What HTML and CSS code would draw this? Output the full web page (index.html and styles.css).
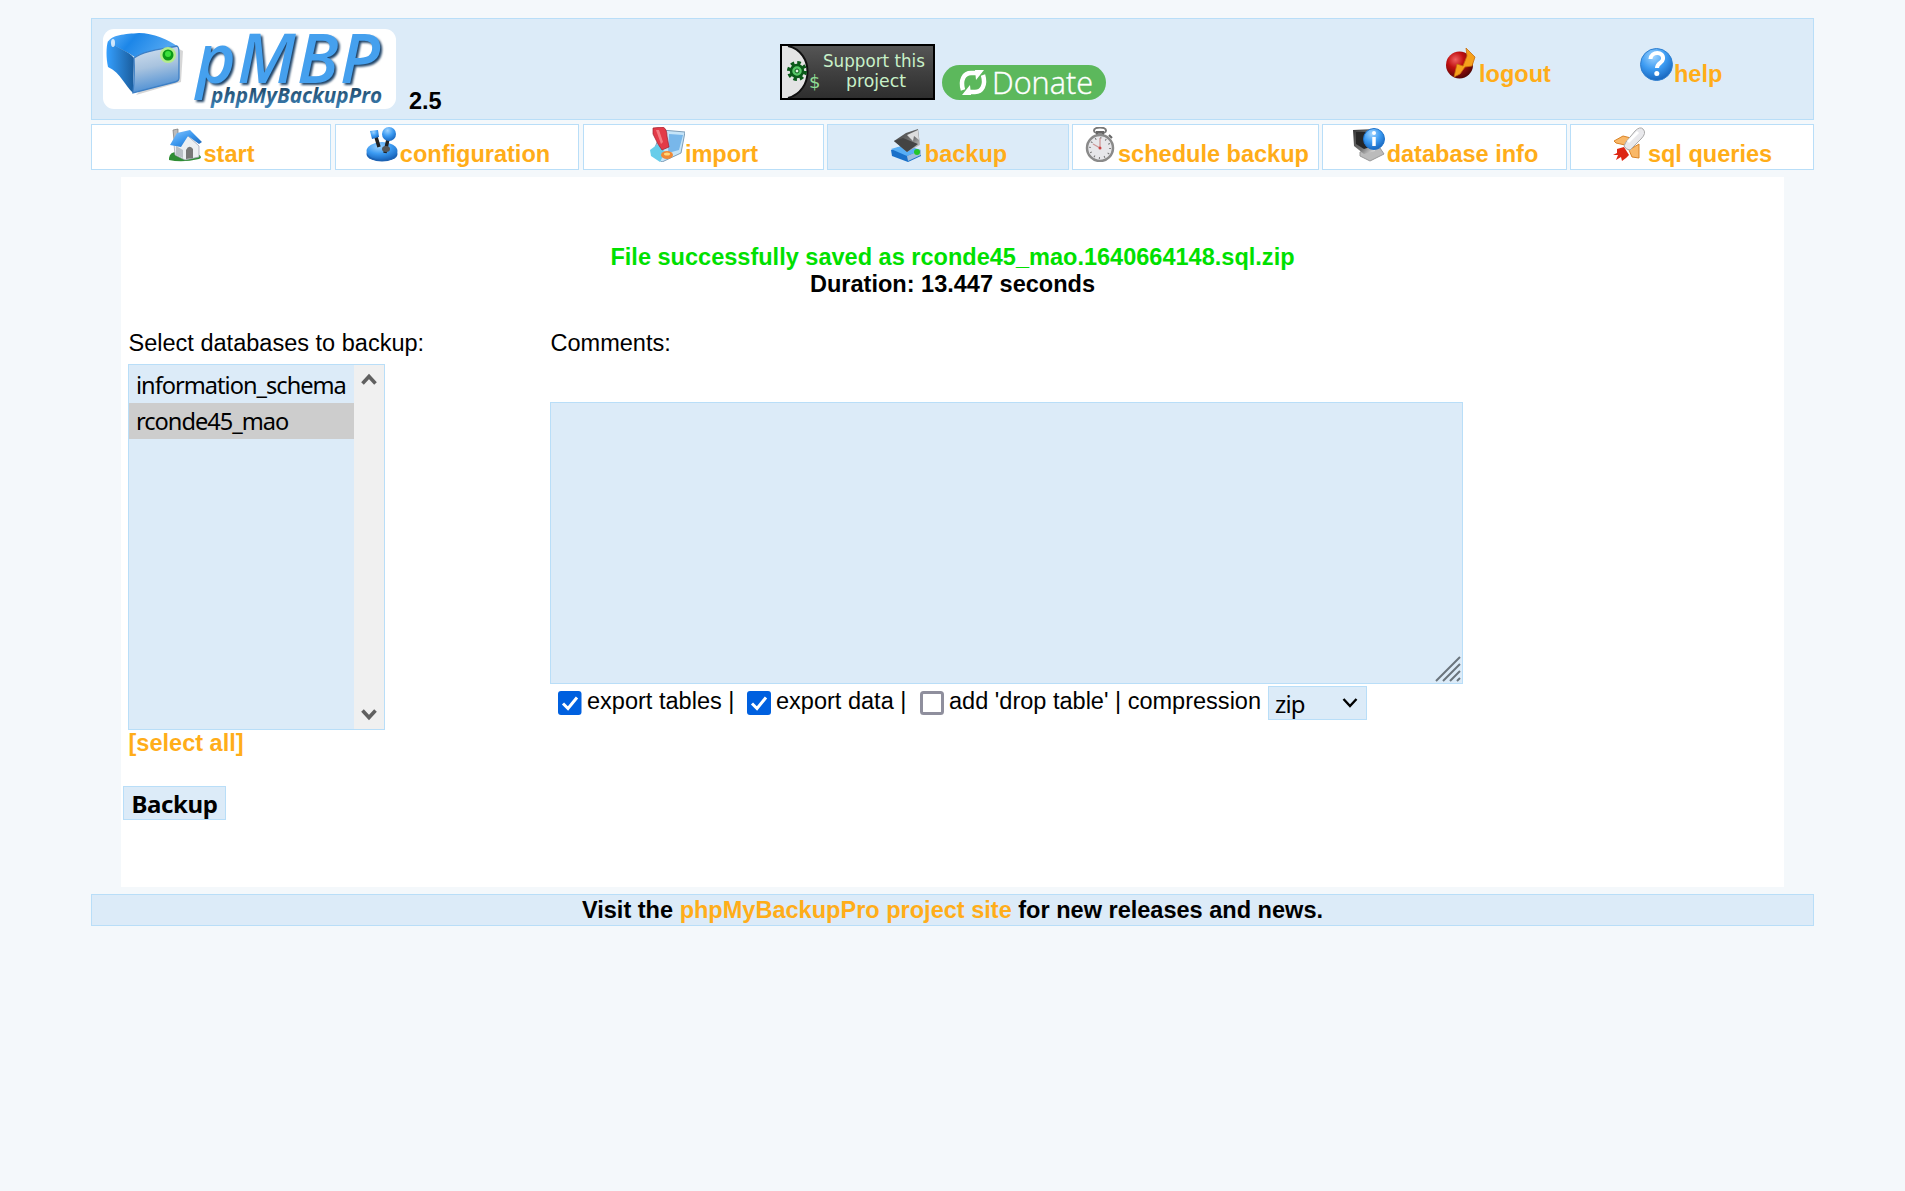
FILE: index.html
```html
<!DOCTYPE html>
<html lang="en">
<head>
<meta charset="utf-8">
<title>phpMyBackupPro</title>
<link rel="stylesheet" href="styles.css">
</head>
<body>
<svg class="defs" width="0" height="0">
  <defs>
    <linearGradient id="blue" x1="0" y1="0" x2="1" y2="1"><stop offset="0" stop-color="#8fcaff"/><stop offset=".5" stop-color="#3b97ee"/><stop offset="1" stop-color="#1b5fae"/></linearGradient>
    <linearGradient id="top" x1="0" y1="0" x2="1" y2=".3"><stop offset="0" stop-color="#5db2fb"/><stop offset=".4" stop-color="#1c86e8"/><stop offset="1" stop-color="#55a9f2"/></linearGradient>
    <linearGradient id="side" x1="0" y1="0" x2="1" y2="0"><stop offset="0" stop-color="#35a0ff"/><stop offset="1" stop-color="#1a5c9c"/></linearGradient>
    <linearGradient id="front" x1="0" y1="0" x2=".2" y2="1"><stop offset="0" stop-color="#d5e2f0"/><stop offset=".5" stop-color="#a8c3df"/><stop offset="1" stop-color="#4d8fd4"/></linearGradient>
    <linearGradient id="dark" x1="0" y1="0" x2="0" y2="1"><stop offset="0" stop-color="#555"/><stop offset=".5" stop-color="#404040"/><stop offset="1" stop-color="#2e2e2e"/></linearGradient>
    <linearGradient id="metal" x1="0" y1="0" x2="1" y2="1"><stop offset="0" stop-color="#333"/><stop offset=".6" stop-color="#777"/><stop offset="1" stop-color="#eee"/></linearGradient>
    <linearGradient id="word" x1="0" y1="0" x2="0" y2="1"><stop offset="0" stop-color="#17364f"/><stop offset="1" stop-color="#3f86bd"/></linearGradient>
    <radialGradient id="ball" cx=".4" cy=".25" r=".8"><stop offset="0" stop-color="#9fd4ff"/><stop offset=".5" stop-color="#3c9bf2"/><stop offset="1" stop-color="#1460b8"/></radialGradient>
    <radialGradient id="red" cx=".35" cy=".3" r=".75"><stop offset="0" stop-color="#f06060"/><stop offset=".4" stop-color="#c01010"/><stop offset="1" stop-color="#4c0505"/></radialGradient>
  </defs>
</svg>
<header class="header">
  <svg class="logo" width="293" height="80" viewBox="0 0 293 80">
    <rect width="293" height="80" rx="11" fill="#fff"/>
    <path d="M31 64L76 51L78 20L62 12L33 62Z" fill="#999" opacity=".4" transform="translate(2 2)"/>
    <path d="M5 13C8 6 22 5 36 4C50 4 66 11 74 17C60 20 44 22 33 29C25 23 15 19 5 13Z" fill="url(#top)"/>
    <path d="M5 12C12 18 26 22 31 29L30 64C22 57 18 44 5 38C3 29 3 18 5 12Z" fill="url(#side)"/>
    <path d="M31 29C42 21 61 20 74 17Q76 18 76 24V49Q76 52 72 53L30 64Q32 45 31 29Z" fill="url(#front)" stroke="#3d7fc5" stroke-width="1.3"/>
    <ellipse cx="10" cy="14" rx="2" ry="4" fill="#fff" opacity=".75"/>
    <circle cx="65" cy="26" r="8" fill="#b4ec8c"/><circle cx="65" cy="26" r="5.5" fill="#0a9a16"/><circle cx="65" cy="25" r="3" fill="#3be03b"/>
    <text class="logo-big" x="93" y="54" textLength="184" lengthAdjust="spacing">pMBP</text>
    <text class="logo-small" x="108" y="74" textLength="171" lengthAdjust="spacingAndGlyphs">phpMyBackupPro</text>
  </svg>
  <span class="version">2.5</span>
  <div class="badges">
    <svg width="155" height="56" viewBox="0 0 155 56">
      <rect width="155" height="56" fill="#000"/><rect x="2" y="2" width="151" height="52" fill="url(#dark)"/>
      <path d="M2 2H8C34 8 34 47 8 54H2Z" fill="#e4e4e4"/><path d="M8 2C34 8 34 47 8 54" fill="none" stroke="#111" stroke-width="2"/>
      <g fill="none" stroke="#0b5a1a"><circle cx="17" cy="27" r="8" stroke-width="4" stroke-dasharray="3.4 2.88"/><circle cx="17" cy="27" r="6" stroke-width="2.5" fill="#58c868"/><circle cx="17" cy="27" r="2" fill="#dff5df"/></g>
      <text class="badge-text" x="43" y="23" textLength="102" lengthAdjust="spacingAndGlyphs">Support this</text>
      <text class="badge-text" x="66" y="43" textLength="60" lengthAdjust="spacingAndGlyphs">project</text>
      <text class="badge-dollar" x="29" y="44">$</text>
    </svg>
    <svg width="164" height="35" viewBox="0 0 164 35">
      <rect width="164" height="35" rx="17.5" fill="#5cb85c"/>
      <g fill="none" stroke="#fff" stroke-width="4.5"><path d="M21 25C18 15 22 8 29 8H36"/><path d="M41 10C44 20 40 27 33 27H26"/></g>
      <path d="M33 5H42L34 15ZM29 30H20L28 20Z" fill="#fff"/>
      <text class="donate" x="50" y="29" textLength="101" lengthAdjust="spacingAndGlyphs">Donate</text>
    </svg>
  </div>
  <a class="logout"><svg class="icon" viewBox="0 0 35 35"><circle cx="15.500" cy="18" r="13.500" fill="url(#red)"/><path d="M22 1L31 10L28 19L21 20L16 27L10 30L13 17L19 19L23 9Z" fill="#f6a11c" stroke="#c66d0c" stroke-width=".8"/></svg>logout</a>
  <a class="help"><svg class="icon" viewBox="0 0 35 35"><circle cx="17.500" cy="17.500" r="16" fill="url(#ball)" stroke="#2f7fd0"/><path d="M11.500 12C12 4 25 4 24 12C23.500 16 18 16 18 21" fill="none" stroke="#fff" stroke-width="4"/><circle cx="17.800" cy="26.500" r="2.500" fill="#fff"/></svg>help</a>
</header>
<nav class="tabs">
  <a class="tab tab-start"><svg class="icon" viewBox="0 0 35 35"><path d="M1 31Q2 24 10 25L28 26Q36 30 31 32Q14 36 1 33Z" fill="#2f8d34"/><path d="M6 17L20 9L31 19V30L17 33L7 28Z" fill="#eceff2" stroke="#99a" stroke-width=".7"/><path d="M8 19L15 23V31L8 28Z" fill="#b9bfc6"/><path d="M18 32V23Q21 17 25 22V31Z" fill="#777"/><path d="M5 3L10 2V12L6 13Z" fill="#bbb" stroke="#777" stroke-width=".7"/><path d="M2 18L9 6L22 3L34 15L31 17L20 9L13 20Z" fill="url(#blue)"/></svg>start</a>
  <a class="tab tab-config"><svg class="icon" viewBox="0 0 35 35"><ellipse cx="17" cy="27" rx="15.500" ry="7.500" fill="#1d63b4"/><ellipse cx="17" cy="24" rx="15.500" ry="9" fill="url(#ball)"/><path d="M11 10L14 20M23 12L20 26" stroke="#222" stroke-width="3.500"/><ellipse cx="21" cy="22" rx="4" ry="3" fill="#555"/><path d="M5 4L13 3L14 10L7 12Z" fill="url(#ball)"/><circle cx="24" cy="7" r="7" fill="url(#ball)"/></svg>configuration</a>
  <a class="tab tab-import"><svg class="icon" viewBox="0 0 35 35"><path d="M12 3L35 5L31 26L12 35L2 28Z" fill="#c5e4f8" stroke="#7d9db8"/><path d="M19 7L33 8L29 23L18 26Z" fill="#78b7ea"/><path d="M0 23L8 17L15 25L10 35L1 29Z" fill="#67cdea"/><path d="M3 1L13 0Q17 2 17 9L19 20L12 23L8 17L3 7Z" fill="#e33a48" stroke="#9c2030" stroke-width=".7"/><path d="M6 3L9 3L13 15L11 17Z" fill="#f47c83"/><ellipse cx="17" cy="28" rx="6" ry="4" fill="#f08a36"/><ellipse cx="17" cy="27" rx="3" ry="1.500" fill="#ffd87a"/></svg>import</a>
  <a class="tab tab-backup active"><svg class="icon" viewBox="0 0 35 35"><path d="M1 23L15 18L31 24V29L18 35L2 29Z" fill="#1970c9"/><path d="M1 22L15 18L31 23L17 29Z" fill="#58aef5"/><path d="M17 29L31 23V28L18 34Z" fill="#9ebddc"/><circle cx="27" cy="25" r="3" fill="#23c52b"/><path d="M4 14L16 6L28 2L30 18L17 25Z" fill="url(#metal)"/><path d="M17 8L28 3L29 13L24 9L23 14Z" fill="#ddd"/><path d="M4 14L13 11L28 17L17 25Z" fill="#444"/></svg>backup</a>
  <a class="tab tab-schedule"><svg class="icon" viewBox="0 0 35 35"><ellipse cx="17" cy="3.500" rx="6" ry="3" fill="none" stroke="#777" stroke-width="2"/><path d="M14 5H20V9H14ZM26 8L29 11" fill="#888" stroke="#666" stroke-width="2"/><circle cx="17" cy="21" r="13" fill="#e7e7ea" stroke="#8a8a8a" stroke-width="2.500"/><circle cx="17" cy="21" r="10" fill="none" stroke="#777" stroke-width="2" stroke-dasharray="1 4.240"/><path d="M17 21V11M17 21L10 17" stroke="#c99" stroke-width="1.300"/><circle cx="17" cy="21" r="1.500" fill="#c44"/></svg>schedule backup</a>
  <a class="tab tab-info"><svg class="icon" viewBox="0 0 35 35"><path d="M8 25L28 21L32 27L18 34L8 29Z" fill="#bbb" stroke="#999"/><path d="M1 3L22 2L23 24L12 27L2 19Z" fill="url(#metal)"/><path d="M4 5L18 5V20L12 22L4 17Z" fill="#262626"/><circle cx="22" cy="12" r="10.500" fill="url(#ball)" stroke="#1f74cc"/><path d="M22 10V19" stroke="#fff" stroke-width="3.500"/><circle cx="22" cy="6" r="2" fill="#fff"/></svg>database info</a>
  <a class="tab tab-sql"><svg class="icon" viewBox="0 0 35 35"><path d="M1 14L10 9L18 11L12 18L3 16ZM26 17L26 31L19 30L16 23Z" fill="#f9b868" stroke="#d98327"/><path d="M4 22L11 20L16 28L13 31L9 34L8 30L3 33L5 28L0 28L4 26Z" fill="#dd2713"/><path d="M13 15L22 4Q27 -1 30 2Q34 6 28 12L17 23Q13 23 11 19Z" fill="#e9e9ec" stroke="#aaa"/><path d="M15 15L25 5" stroke="#fff" stroke-width="3"/></svg>sql queries</a>
</nav>
<main class="panel">
  <div class="notice"><span class="success">File successfully saved as rconde45_mao.1640664148.sql.zip</span><br>Duration: 13.447 seconds</div>
  <div class="form">
    <section class="databases">
      <label>Select databases to backup:</label>
      <div class="listbox">
        <div class="options"><div class="option">information_schema</div><div class="option selected">rconde45_mao</div></div>
        <div class="scrollbar">
          <svg width="16" height="13" viewBox="0 0 16 13"><path d="M1.500 10.500L8 3.500L14.500 10.500" fill="none" stroke="#606060" stroke-width="3.600"/></svg>
          <svg width="16" height="13" viewBox="0 0 16 13"><path d="M1.500 2.500L8 9.500L14.500 2.500" fill="none" stroke="#606060" stroke-width="3.600"/></svg>
        </div>
      </div>
      <a class="select-all">[select all]</a>
    </section>
    <section class="comments">
      <label>Comments:</label>
      <div class="textarea-wrap">
        <textarea></textarea>
        <svg class="grip" width="26" height="26" viewBox="0 0 26 26"><path d="M1 25L25 1M8 25L25 8M15 25L25 15M22 25L25 22" stroke="#6a747c" stroke-width="2"/></svg>
      </div>
      <div class="export">
        <svg class="check" viewBox="0 0 24 24"><rect width="23.500" height="24" rx="3" fill="#0060df"/><path d="M5 12.500L10 17.500L19 6.500" fill="none" stroke="#fff" stroke-width="3"/></svg><span class="t1">export tables |</span>
        <svg class="check" viewBox="0 0 24 24"><rect width="24" height="24" rx="3" fill="#0060df"/><path d="M5 12.500L10 17.500L19 6.500" fill="none" stroke="#fff" stroke-width="3"/></svg><span class="t2">export data |</span>
        <svg class="check" viewBox="0 0 24 24"><rect x="1.500" y="1.500" width="21" height="21" rx="2" fill="#fff" stroke="#8f8f9d" stroke-width="3"/></svg><span class="t3">add 'drop table' | compression</span>
        <div class="dropdown">zip<svg width="16" height="12" viewBox="0 0 16 12"><path d="M1.500 2L8 9L14.500 2" fill="none" stroke="#000" stroke-width="2.400"/></svg></div>
      </div>
    </section>
  </div>
  <button class="backup-button">Backup</button>
</main>
<footer class="footer">Visit the <a>phpMyBackupPro project site</a> for new releases and news.</footer>
</body>
</html>
```
FILE: styles.css
```css
* { box-sizing: border-box; }
body { margin: 0; padding: 18px 91px 0; background: #f4f8fb; color: #000; font: 23.54px/27px "Liberation Sans", Arial, sans-serif; white-space: nowrap; }
svg { display: block; flex: none; }
.defs { position: absolute; }
a { color: #ffad19; font-weight: bold; }
.header { display: flex; align-items: flex-start; width: 1723px; height: 102px; border: 1px solid #b9def8; background: #dcebf8; }
.logo { margin: 10px 0 0 11px; }
.logo-big { font: italic 600 68px "Open Sans", sans-serif; fill: #45a0ee; filter: drop-shadow(2px 2px 1px #1d4267); }
.logo-small { font: italic bold 21px "Open Sans", sans-serif; fill: url(#word); }
.version { width: 36px; margin: 69px 0 0 13px; font-weight: bold; }
.badges { display: flex; align-items: flex-end; gap: 7px; margin: 25px 0 0 335px; }
.badge-text { font: 17px "DejaVu Sans", sans-serif; fill: #c8f0c8; }
.badge-dollar { font: 18px "DejaVu Sans", sans-serif; fill: #8fdc95; }
.donate { font: 300 31px "Open Sans", sans-serif; fill: #fff; stroke: #fff; stroke-width: .4px; }
.icon { display: inline-block; width: 35px; height: 35px; vertical-align: baseline; }
.logout { width: 107px; margin: 28px 0 0 338px; }
.help { margin: 28px 0 0 88px; }
.tabs { display: flex; gap: 3px; margin-top: 4px; }
.tab { height: 46px; padding: 2px 0 0 1px; border: 1px solid #b9def8; background: #fff; text-align: center; }
.active { background: #dcebf8; }
.tab-start { width: 240px; margin-right: 1px; }
.tab-config { width: 244px; margin-right: 1px; }
.tab-import { width: 241px; }
.tab-backup { width: 242px; }
.tab-schedule { width: 247px; }
.tab-info { width: 245px; }
.tab-sql { width: 244px; }
.panel { width: 1663px; height: 710px; margin: 7px 0 0 30px; padding: 67px 0 0 2px; background: #fff; }
.notice { padding-right: 2px; text-align: center; font-weight: bold; }
.success { color: #00e000; }
.form { display: flex; gap: 165px; margin: 32px 0 0 5px; }
.form label { display: block; padding-left: .5px; }
.databases { width: 257px; }
.listbox { display: flex; width: 257px; height: 366px; margin: 7px 0 0; border: 1px solid #b9def8; background: #dcebf8; }
.options { flex: 1; min-width: 0; padding-top: 2px; }
.option { height: 36px; padding-left: 7px; font: 23.6px/36px "Noto Sans", Tahoma, sans-serif; letter-spacing: -1px; }
.selected { background: #cdcdcd; }
.scrollbar { display: flex; flex: none; flex-direction: column; justify-content: space-between; align-items: center; width: 30px; padding: 8px 0 8px; background: #f0f0f0; }
.select-all { display: block; padding-left: .5px; line-height: 26px; }
.textarea-wrap { position: relative; width: 913px; height: 282px; margin-top: 45px; }
textarea { display: block; width: 100%; height: 100%; border: 1px solid #b9def8; background: #dcebf8; resize: none; }
.grip { position: absolute; right: 2px; bottom: 2px; }
.export { display: flex; align-items: flex-start; padding: 2px 0 0 8px; }
.check { width: 24px; height: 24px; margin-top: 5px; }
.export span { margin-left: 5px; line-height: 30px; }
.t1 { width: 160px; }
.t2 { width: 144px; }
.t3 { width: 319px; }
.dropdown { display: flex; align-items: center; justify-content: space-between; width: 99px; height: 34px; padding: 0 8px 0 6px; border: 1px solid #b9def8; background: #dcebf8; font: 24px "Noto Sans", Tahoma, sans-serif; letter-spacing: -.8px; }
.backup-button { display: block; width: 103px; height: 34px; margin-top: 30px; padding: 2px 0 0; border: 1px solid #b9def8; background: #dcebf8; font: bold 24px/30px "Noto Sans", Tahoma, sans-serif; letter-spacing: -.4px; }
.footer { width: 1723px; height: 32px; margin-top: 7px; padding-top: 2px; border: 1px solid #b9def8; background: #dcebf8; text-align: center; font-weight: bold; }
```
